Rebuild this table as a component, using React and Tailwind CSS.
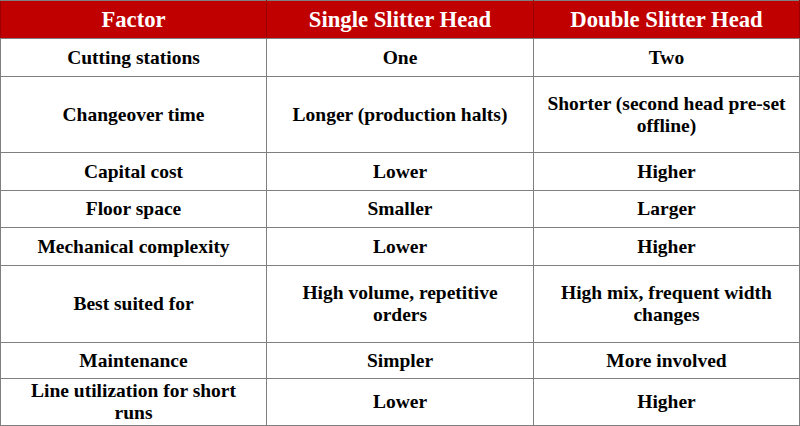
import React from 'react';

const rows = [
    { factor: 'Cutting stations', single: 'One', double: 'Two', h: 'h-[38px]' },
    { factor: 'Changeover time', single: 'Longer (production halts)', double: 'Shorter (second head pre-set offline)', h: 'h-[76px]' },
    { factor: 'Capital cost', single: 'Lower', double: 'Higher', h: 'h-[38px]' },
    { factor: 'Floor space', single: 'Smaller', double: 'Larger', h: 'h-[37px]' },
    { factor: 'Mechanical complexity', single: 'Lower', double: 'Higher', h: 'h-[38px]' },
    { factor: 'Best suited for', single: 'High volume, repetitive orders', double: 'High mix, frequent width changes', h: 'h-[77px]' },
    { factor: 'Maintenance', single: 'Simpler', double: 'More involved', h: 'h-[36px]' },
    { factor: 'Line utilization for short runs', single: 'Lower', double: 'Higher', h: 'h-[47px]' },
];

const cell = 'border border-[#7f7f7f] px-[7px] text-center align-middle';

const App = () => {
    return (
        <div className="w-[800px] h-[426px] bg-white overflow-hidden" style={{ fontFamily: '"Liberation Serif", "Times New Roman", serif' }}>
            <table className="w-[800px] border-collapse table-fixed font-bold text-black text-[19.5px] leading-[22px]">
                <colgroup>
                    <col className="w-[266px]" />
                    <col className="w-[267px]" />
                    <col />
                </colgroup>
                <thead>
                    <tr className="h-[38px] bg-[#c00000] text-white text-[22.7px]">
                        <th className="border border-[#7f7f7f] border-x-[#9a0000] text-center">Factor</th>
                        <th className="border border-[#7f7f7f] border-x-[#9a0000] text-center">Single Slitter Head</th>
                        <th className="border border-[#7f7f7f] border-x-[#9a0000] text-center">Double Slitter Head</th>
                    </tr>
                </thead>
                <tbody>
                    {rows.map((r) => (
                        <tr key={r.factor} className={r.h}>
                            <td className="border border-[#7f7f7f] px-[16px] text-center align-middle">{r.factor}</td>
                            <td className={cell}>{r.single}</td>
                            <td className={cell}>{r.double}</td>
                        </tr>
                    ))}
                </tbody>
            </table>
        </div>
    );
};

export default App;
